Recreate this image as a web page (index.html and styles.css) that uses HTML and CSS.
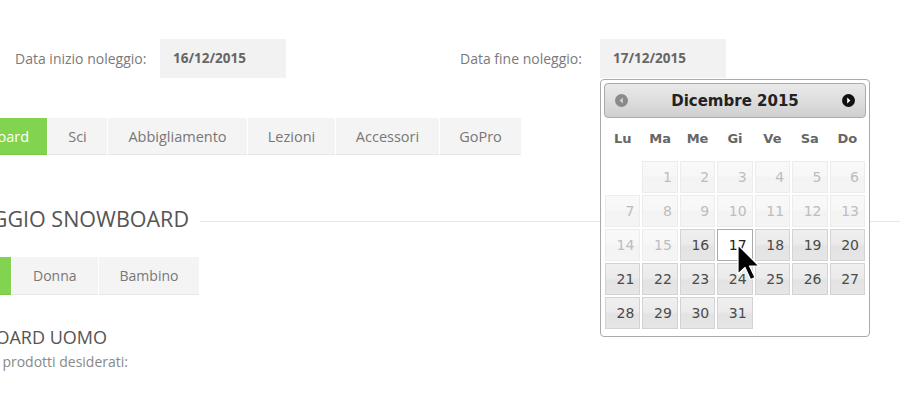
FILE: index.html
```html
<!DOCTYPE html>
<html lang="it">
<head>
<meta charset="utf-8">
<title>Noleggio</title>
<link rel="stylesheet" href="styles.css">
</head>
<body>
<div class="page">
  <div class="dates">
    <div class="date-group first">
      <label class="date-label w145">Data inizio noleggio:</label>
      <div class="date-input">16/12/2015</div>
    </div>
    <div class="date-group second">
      <label class="date-label w140">Data fine noleggio:</label>
      <div class="picker-anchor">
        <div class="date-input">17/12/2015</div>
        <div class="datepicker">
          <div class="dp-header">
            <span class="dp-nav dp-prev">
              <svg width="13" height="13" viewBox="0 0 13 13"><circle cx="6.5" cy="6.5" r="6.5" fill="#8a8a8a"/><path d="M7.8 3.6 L4.6 6.5 L7.8 9.4 Z" fill="#d4d4d4"/></svg>
            </span>
            <span class="dp-title">Dicembre 2015</span>
            <span class="dp-nav dp-next">
              <svg width="13" height="13" viewBox="0 0 13 13"><circle cx="6.5" cy="6.5" r="6.5" fill="#111"/><path d="M5.2 3.6 L8.4 6.5 L5.2 9.4 Z" fill="#fff"/></svg>
            </span>
          </div>
          <table class="dp-table">
            <thead>
              <tr><th>Lu</th><th>Ma</th><th>Me</th><th>Gi</th><th>Ve</th><th>Sa</th><th>Do</th></tr>
            </thead>
            <tbody>
              <tr><td></td><td><span class="day off">1</span></td><td><span class="day off">2</span></td><td><span class="day off">3</span></td><td><span class="day off">4</span></td><td><span class="day off">5</span></td><td><span class="day off">6</span></td></tr>
              <tr><td><span class="day off">7</span></td><td><span class="day off">8</span></td><td><span class="day off">9</span></td><td><span class="day off">10</span></td><td><span class="day off">11</span></td><td><span class="day off">12</span></td><td><span class="day off">13</span></td></tr>
              <tr><td><span class="day off">14</span></td><td><span class="day off">15</span></td><td><span class="day">16</span></td><td><span class="day active">17</span></td><td><span class="day">18</span></td><td><span class="day">19</span></td><td><span class="day">20</span></td></tr>
              <tr><td><span class="day">21</span></td><td><span class="day">22</span></td><td><span class="day">23</span></td><td><span class="day">24</span></td><td><span class="day">25</span></td><td><span class="day">26</span></td><td><span class="day">27</span></td></tr>
              <tr><td><span class="day">28</span></td><td><span class="day">29</span></td><td><span class="day">30</span></td><td><span class="day">31</span></td><td></td><td></td><td></td></tr>
            </tbody>
          </table>
          <svg class="cursor" width="26" height="40" viewBox="0 0 26 40"><path d="M1 1 L1 30 L8 23.5 L13.5 35.5 L18 33.5 L12.5 22 L22 22 Z" fill="#000" stroke="#fff" stroke-width="1.2" stroke-linejoin="round"/></svg>
        </div>
      </div>
    </div>
  </div>

  <div class="tabs main-tabs">
    <div class="tab active t-snow">Snowboard</div>
    <div class="tab t-sci">Sci</div>
    <div class="tab t-abb">Abbigliamento</div>
    <div class="tab t-lez">Lezioni</div>
    <div class="tab t-acc">Accessori</div>
    <div class="tab t-gop">GoPro</div>
  </div>

  <div class="section-head">
    <div class="clip-right w189"><h2 class="section-title">NOLEGGIO SNOWBOARD</h2></div>
    <div class="section-line"></div>
  </div>

  <div class="tabs sub-tabs">
    <div class="tab active">Uomo</div>
    <div class="tab">Donna</div>
    <div class="tab">Bambino</div>
  </div>

  <div class="clip-right w107"><h3 class="sub-title">SNOWBOARD UOMO</h3></div>
  <div class="clip-right w128"><p class="hint">Seleziona i prodotti desiderati:</p></div>
</div>
</body>
</html>
```

FILE: styles.css
```css
html, body {
  margin: 0;
  padding: 0;
  background: #fff;
  overflow: hidden;
}
body {
  font-family: "Open Sans", "Liberation Sans", sans-serif;
  color: #777;
  width: 900px;
  height: 400px;
}
.page {
  width: 900px;
}
.dates {
  display: flex;
  padding-top: 39px;
  height: 39px;
}
.date-group {
  display: flex;
  align-items: center;
}
.date-group.first {
  padding-left: 15px;
  width: 445px;
}
.date-label {
  font-size: 14px;
  color: #7a7a7a;
}
.w145 { width: 145px; }
.w140 { width: 140px; }
.date-input {
  box-sizing: border-box;
  width: 126px;
  height: 39px;
  line-height: 39px;
  padding-left: 13px;
  background: #f2f2f2;
  font-size: 13.5px;
  font-weight: 700;
  color: #666;
}
.picker-anchor {
  position: relative;
}
.datepicker {
  position: absolute;
  left: 0;
  top: 40px;
  box-sizing: border-box;
  width: 270px;
  padding: 3px 3px 3px;
  background: #fff;
  border: 1px solid #aaa;
  border-radius: 4px;
  font-family: "DejaVu Sans", Verdana, sans-serif;
  z-index: 5;
}
.dp-header {
  box-sizing: border-box;
  height: 35px;
  border: 1px solid #aaa;
  border-radius: 4px;
  background: linear-gradient(to bottom, #e9e9e9 0%, #dedede 50%, #cfcfcf 100%);
  display: flex;
  align-items: center;
  justify-content: space-between;
  padding: 0 10px;
}
.dp-nav {
  display: flex;
  width: 13px;
  height: 13px;
}
.dp-title {
  font-size: 15px;
  font-weight: 700;
  color: #222;
}
.dp-table {
  width: 100%;
  border-collapse: collapse;
  table-layout: fixed;
  margin: 0 0 3px;
}
.dp-table th {
  height: 42px;
  padding: 0 0 2px;
  font-size: 13px;
  font-weight: 700;
  color: #666;
  text-align: center;
  box-sizing: border-box;
}
.dp-table td {
  padding: 1px;
  height: 32px;
}
.day {
  display: block;
  box-sizing: border-box;
  height: 32px;
  line-height: 30px;
  padding-right: 5px;
  text-align: right;
  font-size: 14px;
  color: #4a4a4a;
  border: 1px solid #d3d3d3;
  background: linear-gradient(to bottom, #efefef 0%, #ebebeb 45%, #e3e3e3 55%, #e6e6e6 100%);
}
.day.off {
  color: #bdbdbd;
  border-color: #ececec;
  background: linear-gradient(to bottom, #f9f9f9 0%, #f7f7f7 45%, #f3f3f3 55%, #f5f5f5 100%);
}
.day.active {
  background: #fff;
  border-color: #aaa;
  color: #212121;
}
.cursor {
  position: absolute;
  left: 136px;
  top: 164px;
}
.tabs {
  display: flex;
  gap: 1px;
}
.tab {
  height: 37px;
  line-height: 37px;
  padding: 0 20px;
  background: #f4f4f4;
  border-bottom: 1px solid #e6e6e6;
  font-size: 14px;
  color: #777;
  white-space: nowrap;
}
.tab.active {
  background: #82d34f;
  border-bottom-color: #78c845;
  color: #fff;
}
.main-tabs {
  margin-top: 40px;
  margin-left: -66px;
}
.main-tabs .tab {
  box-sizing: border-box;
  padding: 0;
  text-align: center;
  font-size: 14.5px;
}
.t-snow { width: 113px; }
.t-sci { width: 59px; }
.t-abb { width: 139px; }
.t-lez { width: 87px; }
.t-acc { width: 103px; }
.t-gop { width: 81px; }
.sub-tabs {
  margin-top: 25px;
  margin-left: -71px;
}
.sub-tabs .tab {
  padding: 0 21px;
}
.clip-right {
  display: flex;
  justify-content: flex-end;
  white-space: nowrap;
}
.w189 { width: 189px; flex: none; }
.w107 { width: 107px; }
.w128 { width: 128px; }
.section-head {
  display: flex;
  align-items: center;
  margin-top: 50px;
}
.section-title {
  margin: 0;
  font-size: 21.5px;
  line-height: 28px;
  font-weight: 400;
  color: #555;
}
.section-line {
  flex: 1;
  height: 1px;
  margin: 4px 0 0 11px;
  background: #e6e6e6;
}
.sub-tabs {
  margin-top: 24px;
}
.sub-title {
  margin: 30px 0 0;
  font-size: 18px;
  line-height: 24px;
  font-weight: 400;
  color: #555;
}
.hint {
  margin: 3px 0 0;
  font-size: 14px;
  line-height: 20px;
  color: #888;
}
```
